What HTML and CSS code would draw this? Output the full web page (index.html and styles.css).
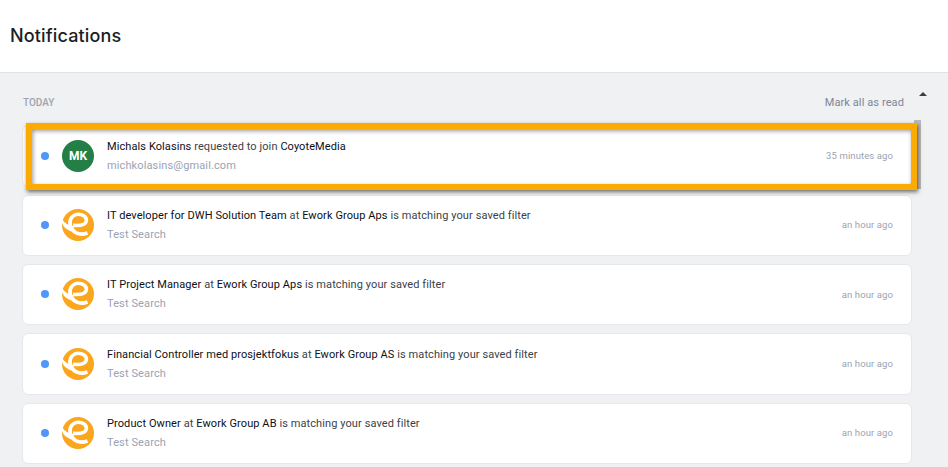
FILE: index.html
```html
<!DOCTYPE html>
<html lang="en">
<head>
<meta charset="utf-8">
<title>Notifications</title>
<link rel="stylesheet" href="styles.css">
</head>
<body>
<svg class="defs" width="0" height="0" aria-hidden="true">
  <symbol id="ework" viewBox="0 0 32 32">
    <circle cx="16" cy="16" r="16" fill="#fba61c"/>
    <path d="M25.5 24 C17 27 10 23.5 8.2 16 C6.8 10 11 5.2 16.5 5.2 C21.8 5.2 25 8.5 24.3 12.2 C23.6 15.8 18.5 17 11 16.4" fill="none" stroke="#fff" stroke-width="3.6"/>
    <path d="M0 10 C3 14.5 6.5 16.5 11 17 L13 22.5 C7 23 2 19 0 14.5 Z" fill="#fff"/>
  </symbol>
</svg>
<header class="page-header">
  <h1 class="page-title">Notifications</h1>
</header>
<main class="content">
  <div class="section-head">
    <span class="section-label">TODAY</span>
    <a class="mark-read">Mark all as read</a>
  </div>
  <ul class="list">
    <li class="card card-highlighted">
      <span class="dot"></span>
      <span class="avatar">MK</span>
      <div class="body">
        <p class="line"><b>Michals Kolasins</b> requested to join <b>CoyoteMedia</b></p>
        <p class="sub">michkolasins@gmail.com</p>
      </div>
      <time class="when">35 minutes ago</time>
      <span class="highlight"></span>
    </li>
    <li class="card">
      <span class="dot"></span>
      <svg class="logo"><use href="#ework"/></svg>
      <div class="body">
        <p class="line"><b>IT developer for DWH Solution Team</b> at <b>Ework Group Aps</b> is matching your saved filter</p>
        <p class="sub">Test Search</p>
      </div>
      <time class="when">an hour ago</time>
    </li>
    <li class="card">
      <span class="dot"></span>
      <svg class="logo"><use href="#ework"/></svg>
      <div class="body">
        <p class="line"><b>IT Project Manager</b> at <b>Ework Group Aps</b> is matching your saved filter</p>
        <p class="sub">Test Search</p>
      </div>
      <time class="when">an hour ago</time>
    </li>
    <li class="card">
      <span class="dot"></span>
      <svg class="logo"><use href="#ework"/></svg>
      <div class="body">
        <p class="line"><b>Financial Controller med prosjektfokus</b> at <b>Ework Group AS</b> is matching your saved filter</p>
        <p class="sub">Test Search</p>
      </div>
      <time class="when">an hour ago</time>
    </li>
    <li class="card">
      <span class="dot"></span>
      <svg class="logo"><use href="#ework"/></svg>
      <div class="body">
        <p class="line"><b>Product Owner</b> at <b>Ework Group AB</b> is matching your saved filter</p>
        <p class="sub">Test Search</p>
      </div>
      <time class="when">an hour ago</time>
    </li>
  </ul>
  <span class="scroll-thumb"></span>
  <span class="scroll-arrow"></span>
</main>
</body>
</html>
```

FILE: styles.css
```css
* { box-sizing: border-box; }
html, body { margin: 0; height: 100%; overflow: hidden; }
body {
  background: #f0f1f3;
  font-family: Roboto, "Liberation Sans", sans-serif;
  color: #1c1f26;
}
.defs { position: absolute; }
.page-header {
  height: 73px;
  background: #fff;
  border-bottom: 1px solid #dfe1e5;
  padding: 0 10px;
  display: flex;
  align-items: center;
}
.page-title {
  margin: 0 0 2px;
  font-family: Inter, sans-serif;
  font-weight: 500;
  font-size: 18px;
  letter-spacing: 0.15px;
  color: #1b1e24;
}
.content {
  position: relative;
  padding: 0 36px 0 22px;
}
.section-head {
  height: 52.4px;
  padding: 23px 8px 0 1px;
  display: flex;
  justify-content: space-between;
  align-items: flex-start;
}
.section-label {
  font-size: 10px;
  line-height: 14px;
  font-weight: 500;
  color: #9ea4b0;
}
.mark-read {
  font-size: 11px;
  line-height: 16px;
  letter-spacing: 0.1px;
  color: #7c8598;
  margin-top: -1px;
}
.list {
  list-style: none;
  margin: 0;
  padding: 0;
  display: flex;
  flex-direction: column;
  gap: 8px;
}
.card {
  position: relative;
  height: 61.33px;
  background: #fff;
  border: 1px solid #e6e7ea;
  border-radius: 6px;
  display: flex;
  align-items: center;
  padding: 0 18px 0 18px;
}
.dot {
  width: 8px;
  height: 8px;
  margin-bottom: 1px;
  border-radius: 50%;
  background: #4f97fb;
  flex: none;
}
.avatar {
  width: 32px;
  height: 32px;
  margin-left: 13px;
  margin-bottom: 1px;
  border-radius: 50%;
  background: #237f45;
  color: #fff;
  font-size: 12px;
  font-weight: 700;
  display: flex;
  align-items: center;
  justify-content: center;
  flex: none;
}
.logo {
  width: 32px;
  height: 32px;
  margin-left: 13px;
  margin-bottom: 1px;
  flex: none;
}
.body {
  flex: 1;
  margin-left: 13px;
  min-width: 0;
}
.line {
  margin: 0;
  font-size: 11px;
  line-height: 16px;
  letter-spacing: 0.09px;
  color: #3a3f4a;
}
.line b {
  font-weight: 400;
  color: #0d1016;
}
.sub {
  margin: 3px 0 0;
  font-size: 11px;
  line-height: 16px;
  letter-spacing: 0.12px;
  color: #9aa3b2;
}
.when {
  font-size: 9.5px;
  letter-spacing: 0.1px;
  color: #9aa3b2;
  margin-bottom: 1px;
}
.highlight {
  position: absolute;
  left: 3px;
  top: -3px;
  width: 891px;
  height: 67px;
  border: 6px solid #fdab03;
  box-shadow: 1px 2px 4px rgba(0,0,0,.55), inset 1px 2px 4px rgba(0,0,0,.4);
}
.scroll-thumb {
  position: absolute;
  left: 914px;
  top: 47px;
  width: 7px;
  height: 69px;
  background: #b9b9b9;
}
.card-highlighted { z-index: 1; }
.scroll-arrow {
  position: absolute;
  left: 919px;
  top: 19px;
  width: 0;
  height: 0;
  border-left: 4px solid transparent;
  border-right: 4px solid transparent;
  border-bottom: 4px solid #3c3c3c;
}
```
